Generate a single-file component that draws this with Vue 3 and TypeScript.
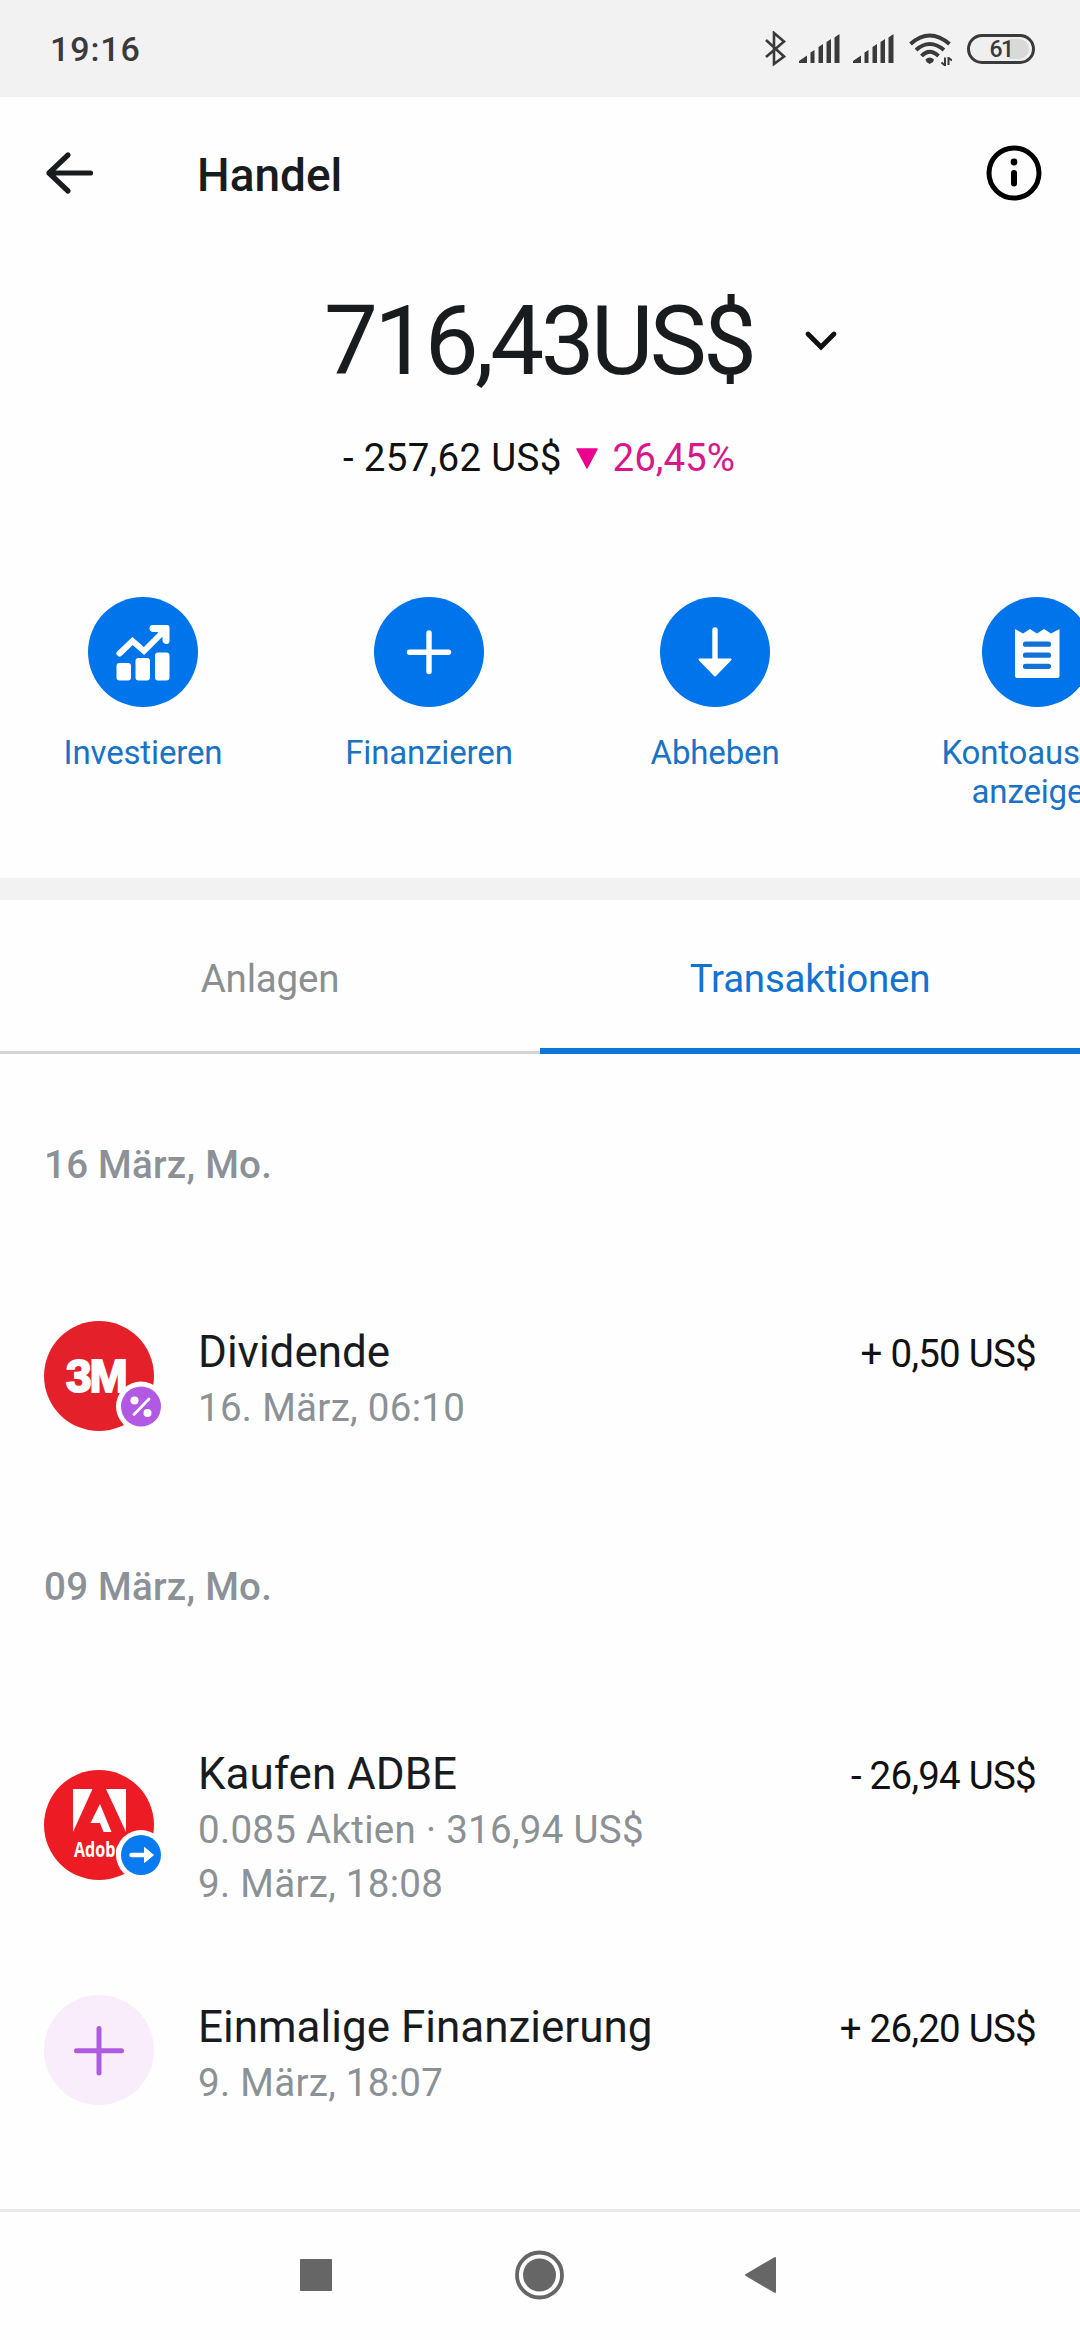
<script setup lang="ts">
interface Action {
  id: string
  label: string[]
}

interface Transaction {
  id: string
  icon: 'mmm' | 'adobe' | 'funding'
  title: string
  details: string[]
  amount: string
}

interface Day {
  label: string
  items: Transaction[]
}

const actions: Action[] = [
  { id: 'invest', label: ['Investieren'] },
  { id: 'fund', label: ['Finanzieren'] },
  { id: 'withdraw', label: ['Abheben'] },
  { id: 'statement', label: ['Kontoauszug', 'anzeigen'] },
]

const days: Day[] = [
  {
    label: '16 März, Mo.',
    items: [
      { id: 'div', icon: 'mmm', title: 'Dividende', details: ['16. März, 06:10'], amount: '+ 0,50 US$' },
    ],
  },
  {
    label: '09 März, Mo.',
    items: [
      {
        id: 'adbe',
        icon: 'adobe',
        title: 'Kaufen ADBE',
        details: ['0.085 Aktien · 316,94 US$', '9. März, 18:08'],
        amount: '- 26,94 US$',
      },
      { id: 'fin', icon: 'funding', title: 'Einmalige Finanzierung', details: ['9. März, 18:07'], amount: '+ 26,20 US$' },
    ],
  },
]
</script>

<template>
  <div class="screen">
    <div class="status">
      <span class="clock">19:16</span>
      <div class="status-icons">
        <svg class="bt" width="22" height="36" viewBox="0 0 22 36">
          <path d="M2 9 L20 25.500 L10 33 V2 L20 10.500 L2 26" fill="none" stroke="#3a3a3a" stroke-width="2.600" />
        </svg>
        <svg v-for="n in 2" :key="n" class="signal" width="41" height="30" viewBox="0 0 41 30">
          <path d="M0 29 V27 L8 21.500 V29Z M11.500 29 V18.500 L15.500 16 V29Z M19.500 29 V13 L24 10 V29Z M27.500 29 V8 L32 5 V29Z M35.500 29 V3.500 L40.500 0 V29Z" fill="#3a3a3a" />
        </svg>
        <svg class="wifi" width="43" height="34" viewBox="0 0 43 34">
          <g fill="none" stroke="#3a3a3a" stroke-width="4">
            <path d="M1.500 11 Q20.500 -6 40.500 11" />
            <path d="M7 17 Q20.500 5 35 17" />
            <path d="M12.500 23 Q20.500 14.500 29.500 23" />
          </g>
          <path d="M16.500 26.500 Q20.500 22.500 25 26.500 L24 29 L20.500 31 L17.500 29Z" fill="#3a3a3a" />
          <path d="M36 33 V24.500 M36 32.500 L32.500 29.500 M39.500 24 V32 M39.500 25 L43 27.500" fill="none" stroke="#3a3a3a" stroke-width="2" />
        </svg>
        <div class="battery">
          <span class="battery-level"></span>
          <span class="battery-text">61</span>
        </div>
      </div>
    </div>

    <header class="header">
      <svg class="back" width="50" height="44" viewBox="0 0 50 44">
        <path d="M45.500 22 H4 M23 4 L4 22 L23 40" fill="none" stroke="#191c1f" stroke-width="5.200" stroke-linecap="round" stroke-linejoin="round" />
      </svg>
      <h1 class="title">Handel</h1>
      <svg class="info" width="56" height="56" viewBox="0 0 56 56">
        <circle cx="28" cy="28" r="25" fill="none" stroke="#000" stroke-width="5" />
        <circle cx="28" cy="17" r="3.400" fill="#000" />
        <path d="M28 28 V38.500" stroke="#000" stroke-width="6" stroke-linecap="round" />
      </svg>
    </header>

    <section class="balance">
      <div class="total-row">
        <span class="total">716,43US$</span>
        <svg class="chevron" width="34" height="24" viewBox="0 0 34 24">
          <path d="M4 4 L17 17 L30 4" fill="none" stroke="#111" stroke-width="4.800" stroke-linecap="round" />
        </svg>
      </div>
      <div class="change-row">
        <span class="change">- 257,62 US$</span>
        <svg class="down" width="22" height="21" viewBox="0 0 22 21">
          <path d="M1 1 H21 L11 20Z" fill="#eb008d" stroke="#eb008d" stroke-width="1.500" stroke-linejoin="round" />
        </svg>
        <span class="percent">26,45%</span>
      </div>
    </section>

    <nav class="actions">
      <div v-for="a in actions" :key="a.id" class="action" :class="a.id">
        <svg width="110" height="110" viewBox="0 0 110 110">
          <circle cx="55" cy="55" r="55" fill="#0075eb" />
          <g v-if="a.id === 'invest'" fill="#fff">
            <rect x="28.500" y="66" width="14.500" height="17.500" rx="3" />
            <rect x="47.500" y="61" width="14.500" height="22.500" rx="3" />
            <rect x="67" y="55.500" width="14.500" height="28" rx="3" />
            <path d="M31.500 56.500 L44.500 44 L56 54 L74 36" fill="none" stroke="#fff" stroke-width="6" stroke-linecap="round" />
            <path d="M64.500 28 H79 Q81.500 28 81.500 30.500 V44 Q81.500 47 78.500 47 Q75.500 47 74.500 44 V40 L69.500 35 H64.500 Q61.500 34 61.500 31.500 Q61.500 28 64.500 28Z" />
          </g>
          <path v-else-if="a.id === 'fund'" d="M55 36 V74.500 M35.500 55.200 H74.500" stroke="#fff" stroke-width="5.400" stroke-linecap="round" />
          <g v-else-if="a.id === 'withdraw'" fill="#fff">
            <path d="M55 33 V65" stroke="#fff" stroke-width="5.400" stroke-linecap="round" />
            <path d="M39.500 62.500 H70.500 L55 78.500Z" stroke="#fff" stroke-width="2" stroke-linejoin="round" />
          </g>
          <g v-else>
            <path d="M33 32 L41 36.500 L48 32 L55 36.500 L62 32 L69 36.500 L77.500 32 V79 Q77.500 81 75.500 81 H35 Q33 81 33 79Z" fill="#fff" />
            <path d="M43.500 47.200 H66.500 M43.500 58.200 H66.500 M43.500 69.300 H66.500" stroke="#1272d6" stroke-width="5.200" stroke-linecap="round" />
          </g>
        </svg>
        <div class="action-label">
          <div v-for="line in a.label" :key="line">{{ line }}</div>
        </div>
      </div>
    </nav>

    <div class="tabs">
      <div class="tab"><span>Anlagen</span></div>
      <div class="tab active"><span>Transaktionen</span></div>
    </div>

    <main class="list">
      <section v-for="d in days" :key="d.label" class="day">
        <h2 class="date">{{ d.label }}</h2>
        <article v-for="t in d.items" :key="t.id" class="item" :class="t.icon">
          <svg class="avatar" width="122" height="110" viewBox="0 0 122 110">
            <template v-if="t.icon === 'mmm'">
              <circle cx="55" cy="55" r="55" fill="#e4212a" />
              <text x="22" y="71" class="mmm-text">3M</text>
              <circle cx="97" cy="85.500" r="25" fill="#fff" />
              <circle cx="97" cy="85.500" r="20" fill="#b259e3" />
              <circle cx="90.500" cy="79.500" r="4" fill="#fff" />
              <circle cx="103.500" cy="92" r="4" fill="#fff" />
              <path d="M90 93.500 L105 78" stroke="#fff" stroke-width="2.800" stroke-linecap="round" />
            </template>
            <template v-else-if="t.icon === 'adobe'">
              <circle cx="55" cy="55" r="55" fill="#ed1c24" />
              <path d="M29 19 H48.500 L29 62Z M62 19 H82 V62Z M56 34 L67.500 62 H59.500 L56 53 H46.500Z" fill="#fff" />
              <text x="30" y="87" textLength="51" lengthAdjust="spacingAndGlyphs" class="adobe-text">Adobe</text>
              <circle cx="97" cy="85" r="25" fill="#fff" />
              <circle cx="97" cy="85" r="20" fill="#0a7af0" />
              <path d="M87.500 85 H101" stroke="#fff" stroke-width="4.400" stroke-linecap="round" />
              <path d="M100.500 77.500 L109.500 85 L100.500 92.500Z" fill="#fff" stroke="#fff" stroke-linejoin="round" />
            </template>
            <template v-else>
              <circle cx="55" cy="55" r="55" fill="#f9edfc" />
              <path d="M55 33.500 V78 M32.500 55.800 H77.500" stroke="#ae5be0" stroke-width="5" stroke-linecap="round" />
            </template>
          </svg>
          <div class="body">
            <div class="item-title">{{ t.title }}</div>
            <div v-for="line in t.details" :key="line" class="detail">{{ line }}</div>
          </div>
          <div class="amount">{{ t.amount }}</div>
        </article>
      </section>
    </main>

    <footer class="navbar">
      <svg width="1080" height="128" viewBox="0 0 1080 128">
        <g fill="#666">
          <rect x="300" y="47" width="32" height="32" rx="1" />
          <circle cx="539.500" cy="63" r="16.500" />
          <circle cx="539.500" cy="63" r="22.500" fill="none" stroke="#666" stroke-width="3.800" />
          <path d="M746 63 L775 46 V80Z" stroke="#666" stroke-width="2" stroke-linejoin="round" />
        </g>
      </svg>
    </footer>
  </div>
</template>

<style>
body {
  margin: 0;
  background: #fff;
}
</style>

<style scoped>
.screen {
  display: flex;
  flex-direction: column;
  width: 1080px;
  height: 2340px;
  overflow: hidden;
  background: #fefefe;
  font-family: Roboto, 'Liberation Sans', sans-serif;
  font-size: 38.5px;
  color: #191c1f;
  white-space: nowrap;
}
.status {
  display: flex;
  justify-content: space-between;
  align-items: center;
  height: 97px;
  padding: 0 45px 0 50px;
  box-sizing: border-box;
  background: #f2f2f2;
}
.clock {
  font-size: 34px;
  font-weight: 500;
  letter-spacing: 0.9px;
  color: #3a3a3a;
  line-height: 40px;
}
.status-icons {
  display: flex;
  align-items: center;
}
.signal {
  margin-left: 13px;
}
.wifi {
  margin: 3px 15px 0 15px;
}
.battery {
  position: relative;
  display: flex;
  justify-content: center;
  width: 68px;
  height: 30px;
  box-sizing: border-box;
  border: 3px solid #3a3a3a;
  border-radius: 15px;
  background: #efefef;
}
.battery-level {
  position: absolute;
  top: 2px;
  right: 3px;
  width: 20px;
  height: 20px;
  border-radius: 0 10px 10px 0;
  background: #d9d9d9;
}
.battery-text {
  position: relative;
  font-size: 23px;
  font-weight: 500;
  line-height: 25px;
  letter-spacing: -1.5px;
  color: #3a3a3a;
}
.header {
  display: flex;
  align-items: center;
  height: 152px;
  padding: 0 38px 0 45px;
}
.title {
  flex: 1;
  margin: 4px 0 0 102px;
  font-size: 46px;
  font-weight: 500;
  line-height: 52px;
}
.balance {
  display: flex;
  flex-direction: column;
  height: 348px;
}
.info {
  margin-left: 1px;
}
.total-row {
  display: flex;
  align-items: center;
  height: 122px;
  padding: 31px 0 0 324px;
}
.total {
  font-size: 96px;
  letter-spacing: -3.6px;
  line-height: 112px;
}
.chevron {
  margin: 2px 0 0 51px;
}
.change-row {
  display: flex;
  align-items: center;
  margin-top: 31px;
  padding-left: 343px;
  color: #111;
}
.change {
  line-height: 50px;
  letter-spacing: 0.3px;
}
.down {
  margin: 1px 15px 0 14px;
}
.percent {
  line-height: 50px;
  color: #d6188c;
}
.actions {
  display: flex;
  height: 281px;
}
.action {
  display: flex;
  flex-direction: column;
  align-items: center;
  flex: 0 0 286px;
}
.action.statement {
  flex-basis: 358px;
}
.action-label {
  margin-top: 26px;
  font-size: 33px;
  line-height: 39px;
  letter-spacing: -0.15px;
  text-align: center;
  color: #1a72c4;
}
.tabs {
  display: flex;
  height: 154px;
  border-top: 22px solid #f2f2f2;
}
.tab {
  flex: 1;
  display: flex;
  justify-content: center;
  box-sizing: border-box;
  padding-top: 54px;
  line-height: 50px;
  letter-spacing: -0.2px;
  border-bottom: 3px solid #d2d4d5;
  color: #8b8f92;
}
.tab.active {
  color: #1173d0;
  border-bottom: 6px solid #0f75d8;
}
.list {
  flex: 1;
}
.date {
  margin: 0;
  padding: 84px 0 0 44px;
  height: 166px;
  box-sizing: border-box;
  font-size: 38.5px;
  font-weight: 500;
  line-height: 54px;
  letter-spacing: 0.25px;
  color: #8b9196;
}
.day + .day .date {
  padding-top: 20px;
  height: 102px;
}
.item {
  display: flex;
  align-items: flex-start;
  box-sizing: border-box;
  padding: 0 44px;
}
.item.mmm {
  padding-top: 101px;
  height: 320px;
}
.item.adobe {
  padding-top: 106px;
  height: 271px;
}
.item.funding {
  padding-top: 82px;
}
.avatar {
  margin-right: 32px;
}
.adobe .avatar {
  margin-top: 22px;
}
.body {
  flex: 1;
  margin-top: 5px;
}
.adobe .body {
  margin-top: 0;
}
.funding .body {
  margin-top: 6px;
}
.item-title {
  margin-bottom: 3px;
  font-size: 44px;
  line-height: 52px;
}
.detail {
  line-height: 53.5px;
  letter-spacing: 0.3px;
  color: #8b9194;
}
.amount {
  margin-top: 7px;
  line-height: 52px;
  letter-spacing: -0.75px;
  color: #111;
}
.adobe .amount {
  margin-top: 2px;
}
.funding .amount {
  margin-top: 8px;
}
.mmm-text {
  font-family: 'Liberation Sans', sans-serif;
  font-size: 46px;
  font-weight: 700;
  letter-spacing: -2px;
  fill: #fff;
  stroke: #fff;
  stroke-width: 2px;
}
.adobe-text {
  font-family: 'Open Sans', sans-serif;
  font-size: 21px;
  font-weight: 700;
  fill: #fff;
}
.navbar {
  height: 128px;
  border-top: 3px solid #e8e8e8;
}
.navbar svg {
  display: block;
}
</style>
